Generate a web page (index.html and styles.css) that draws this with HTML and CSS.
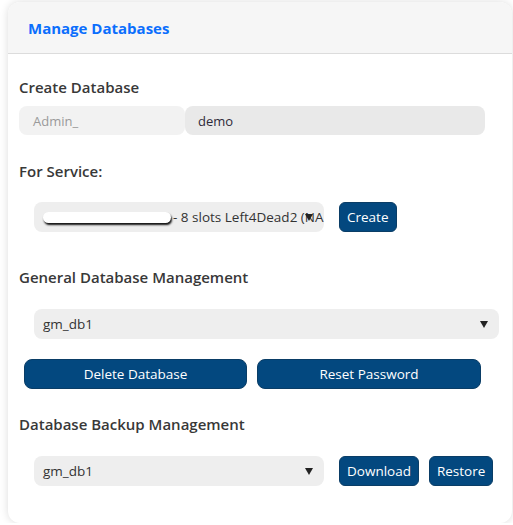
FILE: index.html
```html
<!DOCTYPE html>
<html>
<head>
<meta charset="utf-8">
<link rel="stylesheet" href="styles.css">
</head>
<body>
<div class="card">
  <div class="card-header"><h1 class="title">Manage Databases</h1></div>
  <div class="card-body">
    <div class="label l1">Create Database</div>
    <div class="input-group">
      <span class="addon">Admin_</span>
      <span class="input">demo</span>
    </div>
    <div class="label l2">For Service:</div>
    <div class="row r1">
      <div class="select narrow">
        <span class="redact"></span><span class="sel-text">- 8 slots Left4Dead2 (NA</span>
        <span class="arrow"></span>
      </div>
      <button class="btn">Create</button>
    </div>
    <div class="label l3">General Database Management</div>
    <div class="row r2">
      <div class="select wide"><span class="sel-text">gm_db1</span><span class="arrow"></span></div>
    </div>
    <div class="btn-row">
      <button class="btn big">Delete Database</button>
      <button class="btn big">Reset Password</button>
    </div>
    <div class="label l4">Database Backup Management</div>
    <div class="row r3">
      <div class="select narrow"><span class="sel-text">gm_db1</span><span class="arrow"></span></div>
      <button class="btn">Download</button>
      <button class="btn">Restore</button>
    </div>
  </div>
</div>
</body>
</html>
```
FILE: styles.css
```css
* { box-sizing: border-box; }
html, body { margin: 0; padding: 0; background: #fff; }
body { font-family: "Open Sans", "Noto Sans", sans-serif; color: #333; }
.card {
  margin: 2px 1px 0 8px;
  height: 521px;
  border-radius: 12px;
  background: #fff;
  box-shadow: 0 0 8px rgba(0,0,0,0.14);
  overflow: hidden;
}
.card-header {
  height: 52px;
  background: #f6f6f6;
  border-bottom: 1px solid #dcdcdc;
  padding: 0 20px;
  display: flex;
  align-items: center;
}
.title {
  margin: 0;
  font-size: 15px;
  font-weight: 700;
  color: #0b6efd;
  letter-spacing: 0;
}
.card-body { padding: 0 11px; }
.label {
  font-size: 15px;
  font-weight: 600;
  line-height: 20px;
  color: #383838;
}
.l1 { padding-top: 23px; }
.l2 { margin-top: 26px; }
.l3 { margin-top: 35px; }
.l4 { margin-top: 25px; }
.input-group {
  display: flex;
  margin-top: 9px;
  width: 466px;
  height: 29px;
  font-size: 13px;
}
.addon {
  width: 166px;
  background: #f2f2f2;
  color: #9a9a9a;
  border-radius: 8px;
  padding-left: 14px;
  display: flex;
  align-items: center;
}
.input {
  flex: 1;
  background: #e9e9e9;
  border-radius: 8px;
  padding-left: 13px;
  display: flex;
  align-items: center;
  color: #2f2a3a;
}
.row {
  display: flex;
  align-items: center;
  gap: 15px;
  padding-left: 15px;
}
.r1 { margin-top: 21px; }
.r2 { margin-top: 22px; }
.r3 { margin-top: 22px; }
.r3 .btn + .btn { margin-left: -5px; }
.select {
  position: relative;
  height: 30px;
  background: #eeeeee;
  border-radius: 8px;
  display: flex;
  align-items: center;
  padding-left: 9px;
  font-size: 13.5px;
  color: #333;
  overflow: hidden;
  white-space: nowrap;
}
.narrow { width: 290px; }
.wide { width: 465px; }
.redact {
  display: inline-block;
  flex: none;
  width: 128px;
  height: 11px;
  background: #fff;
  border-radius: 6px;
  box-shadow: 1px 2px 2px #111;
  margin-right: 2px;
}
.sel-text { flex: none; }
.arrow {
  position: absolute;
  right: 11px;
  top: 12px;
  width: 0; height: 0;
  border-left: 4px solid transparent;
  border-right: 4px solid transparent;
  border-top: 7px solid #222;
}
.btn {
  height: 30px;
  padding: 0 7px;
  border: 1px solid #0a3d66;
  background: #03487f;
  color: #fff;
  border-radius: 6px;
  font-family: "Open Sans", "Noto Sans", sans-serif;
  font-size: 13.5px;
  cursor: pointer;
}
.btn-row {
  display: flex;
  gap: 10px;
  margin-top: 20px;
  padding-left: 5px;
}
.big { width: 223px; border-radius: 8px; padding: 0; }
.btn-row .big + .big { width: 224px; }
```
